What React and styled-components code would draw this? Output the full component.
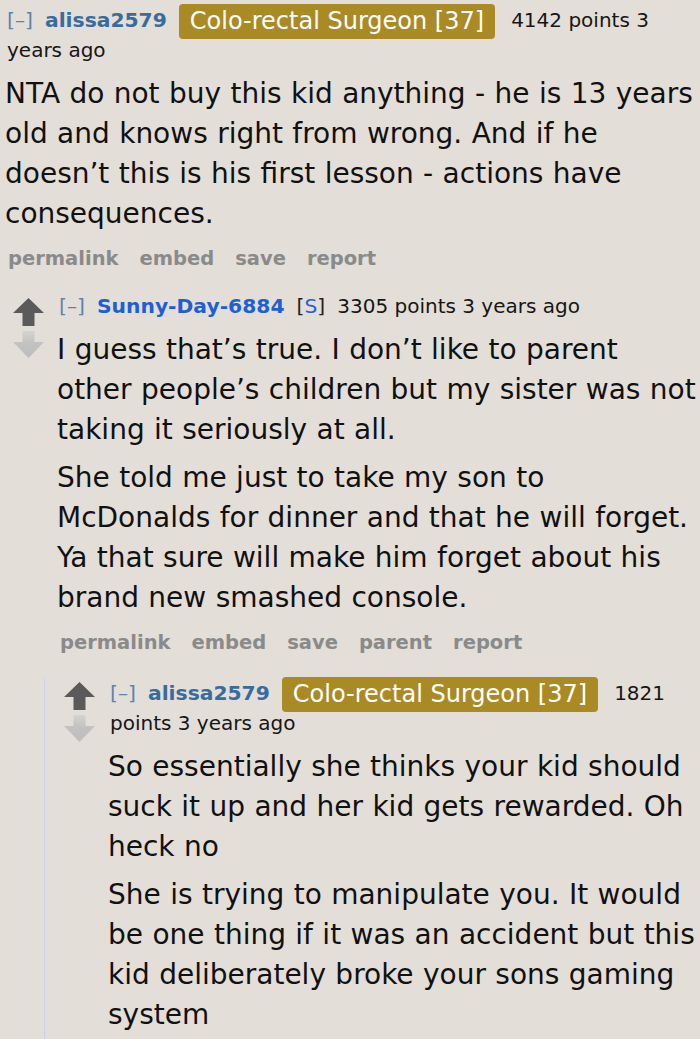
import React from "react";
import styled, { createGlobalStyle } from "styled-components";

const GlobalStyle = createGlobalStyle`
    html, body {
        margin: 0;
        padding: 0;
        background: #e3ded7;
    }
    body {
        font-family: "DejaVu Sans", Verdana, sans-serif;
        color: #111;
    }
`;

function UpArrow() {
    return (
        <svg width="31" height="28" viewBox="0 0 31 28">
            <polygon
                points="15.5,0 31,15 21.5,15 21.5,28 9.5,28 9.5,15 0,15"
                fill="#5a5a5a"
            />
        </svg>
    );
}

function DownArrow({ id }) {
    return (
        <svg width="31" height="27" viewBox="0 0 31 27">
            <defs>
                <linearGradient id={id} x1="0" y1="0" x2="0" y2="1">
                    <stop offset="0" stopColor="#d6d3cf" />
                    <stop offset="0.45" stopColor="#c2c2c2" />
                    <stop offset="1" stopColor="#bdbdbd" />
                </linearGradient>
            </defs>
            <polygon
                points="9.5,0 21.5,0 21.5,11 31,11 15.5,27 0,11 9.5,11"
                fill={`url(#${id})`}
            />
        </svg>
    );
}

// each paragraph is given as its lines, so the breaks follow the screenshot
function Paragraph({ lines }) {
    return (
        <P>
            {lines.map((line, i) => (
                <React.Fragment key={i}>
                    {i > 0 && <br />}
                    {line}
                </React.Fragment>
            ))}
        </P>
    );
}

function Comment({ user, submitter, flair, points, paragraphs, buttons, arrows, voteTop, id }) {
    return (
        <Head>
            {arrows && (
                <Voter $top={voteTop}>
                    <UpArrow />
                    <DownArrow id={id} />
                </Voter>
            )}
            <Entry>
                <Tagline>
                    <Expand>[–]</Expand>
                    <Author $op={submitter}>{user}</Author>
                    {submitter && (
                        <Submitter>
                            [<span>S</span>]
                        </Submitter>
                    )}
                    {flair && <Flair>{flair}</Flair>}
                    <Score>{points}</Score>
                </Tagline>
                <Body>
                    {paragraphs.map((p, i) => (
                        <Paragraph key={i} lines={p} />
                    ))}
                </Body>
                <Buttons>
                    {buttons.map((b) => (
                        <Button key={b}>{b}</Button>
                    ))}
                </Buttons>
            </Entry>
        </Head>
    );
}

export default function App() {
    return (
        <>
            <GlobalStyle />
            <Page>
                <Thing>
                    <Comment
                        id="d0"
                        user="alissa2579"
                        flair="Colo-rectal Surgeon [37]"
                        points="4142 points 3 years ago"
                        paragraphs={[
                            [
                                "NTA do not buy this kid anything - he is 13 years",
                                "old and knows right from wrong. And if he",
                                "doesn’t this is his first lesson - actions have",
                                "consequences.",
                            ],
                        ]}
                        buttons={["permalink", "embed", "save", "report"]}
                    />
                    <ChildList $indent={8} $gap={20}>
                        <Thing>
                            <Comment
                                id="d1"
                                arrows
                                voteTop={7}
                                submitter
                                user="Sunny-Day-6884"
                                points="3305 points 3 years ago"
                                paragraphs={[
                                    [
                                        "I guess that’s true. I don’t like to parent",
                                        "other people’s children but my sister was not",
                                        "taking it seriously at all.",
                                    ],
                                    [
                                        "She told me just to take my son to",
                                        "McDonalds for dinner and that he will forget.",
                                        "Ya that sure will make him forget about his",
                                        "brand new smashed console.",
                                    ],
                                ]}
                                buttons={["permalink", "embed", "save", "parent", "report"]}
                            />
                            <ChildList $indent={31} $gap={23} $line>
                                <Thing $pad={19}>
                                    <Comment
                                        id="d2"
                                        arrows
                                        voteTop={4}
                                        user="alissa2579"
                                        flair="Colo-rectal Surgeon [37]"
                                        points="1821 points 3 years ago"
                                        paragraphs={[
                                            [
                                                "So essentially she thinks your kid should",
                                                "suck it up and her kid gets rewarded. Oh",
                                                "heck no",
                                            ],
                                            [
                                                "She is trying to manipulate you. It would",
                                                "be one thing if it was an accident but this",
                                                "kid deliberately broke your sons gaming",
                                                "system",
                                            ],
                                        ]}
                                        buttons={[]}
                                    />
                                </Thing>
                            </ChildList>
                        </Thing>
                    </ChildList>
                </Thing>
            </Page>
        </>
    );
}

const Page = styled.div`
    padding: 5px 0 0 5px;
    width: 700px;
    box-sizing: border-box;
    overflow: hidden;
`;
const Thing = styled.div`
    padding-left: ${(p) => p.$pad || 0}px;
`;
const ChildList = styled.div`
    margin-left: ${(p) => p.$indent}px;
    margin-top: ${(p) => p.$gap}px;
    border-left: ${(p) => (p.$line ? "1px dotted #c3c8dc" : "none")};
`;
const Head = styled.div`
    display: flex;
    align-items: flex-start;
`;
const Voter = styled.div`
    width: 31px;
    margin-right: 13px;
    margin-top: ${(p) => p.$top}px;
    display: flex;
    flex-direction: column;
    gap: 5px;
    flex-shrink: 0;
`;
const Entry = styled.div`
    flex: 1;
    min-width: 0;
`;
const Tagline = styled.div`
    font-size: 20.3px;
    line-height: 30px;
    padding-left: 2px;
    padding-right: 6px;
    color: #222;
`;
const Expand = styled.span`
    color: #5b84b1;
    margin-right: 12px;
`;
const Author = styled.span`
    font-weight: bold;
    color: ${(p) => (p.$op ? "#1f5fd4" : "#3a6b9e")};
    margin-right: 12px;
`;
const Submitter = styled.span`
    color: #222;
    margin-right: 12px;
    span {
        color: #2a62d0;
    }
`;
const Flair = styled.span`
    display: inline-block;
    background: #aa8a24;
    color: #fff;
    font-size: 24px;
    line-height: 35px;
    padding: 0 11px;
    border-radius: 4px;
    margin: -1px 16px -4px 0;
    vertical-align: top;
`;
const Score = styled.span`
    font-size: 20px;
    color: #161616;
`;
const Body = styled.div`
    margin-top: 9px;
`;
const P = styled.p`
    margin: 0 0 8px;
    font-size: 28px;
    line-height: 40px;
    word-spacing: 0.5px;
    color: #111;
`;
const Buttons = styled.div`
    display: flex;
    gap: 21px;
    padding-left: 3px;
    margin-top: 13px;
    &:empty {
        display: none;
    }
`;
const Button = styled.span`
    font-size: 19.5px;
    line-height: 24px;
    font-weight: bold;
    color: #8a8a8a;
`;
